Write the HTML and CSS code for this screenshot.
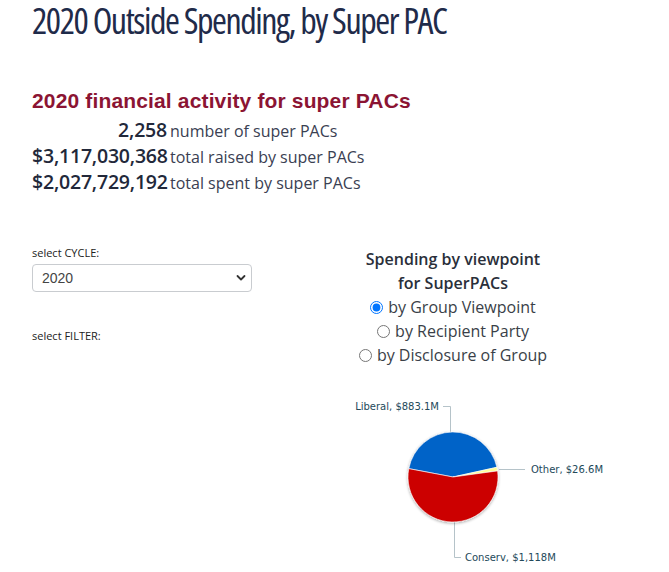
FILE: index.html
```html
<!DOCTYPE html>
<html>
<head>
<meta charset="utf-8">
<link rel="stylesheet" href="styles.css">
</head>
<body>
<div class="page">
  <h1 class="title">2020 Outside Spending, by Super PAC</h1>
  <h2 class="subhead">2020 financial activity for super PACs</h2>
  <div class="stats">
    <span class="num">2,258</span><span class="lbl">number of super PACs</span>
    <span class="num">$3,117,030,368</span><span class="lbl">total raised by super PACs</span>
    <span class="num">$2,027,729,192</span><span class="lbl">total spent by super PACs</span>
  </div>
  <div class="section">
    <div class="left">
      <div class="field-label">select CYCLE:</div>
      <div class="select-wrap">
        <select class="select"><option>2020</option></select>
        <svg class="chev" width="10" height="8" viewBox="0 0 10 8"><path d="M1.5 2 L5 5.5 L8.5 2" fill="none" stroke="#333" stroke-width="1.8" stroke-linecap="round" stroke-linejoin="round"/></svg>
      </div>
      <div class="field-label filter">select FILTER:</div>
    </div>
    <div class="right">
      <div class="chart-title">Spending by viewpoint<br>for SuperPACs</div>
      <label class="opt"><input type="radio" name="v" checked> by Group Viewpoint</label>
      <label class="opt"><input type="radio" name="v"> by Recipient Party</label>
      <label class="opt"><input type="radio" name="v"> by Disclosure of Group</label>
      <svg class="pie" width="300" height="177" viewBox="0 0 300 177">
        <defs>
          <filter id="sh" x="-20%" y="-20%" width="140%" height="140%">
            <feGaussianBlur in="SourceAlpha" stdDeviation="1.5"/>
            <feOffset dx="0" dy="1"/>
            <feComponentTransfer><feFuncA type="linear" slope="0.35"/></feComponentTransfer>
            <feMerge><feMergeNode/><feMergeNode in="SourceGraphic"/></feMerge>
          </filter>
        </defs>
        <g fill="none" stroke="#b5c3c9" stroke-width="1">
          <polyline points="140,10.5 147.5,10.5 147.5,37"/>
          <polyline points="196,73.5 222,73.5"/>
          <polyline points="151.5,125 151.5,161.5 158,161.5"/>
        </g>
        <g filter="url(#sh)" stroke="#ffffff" stroke-width="0.6">
          <path d="M150,81 L193.93,71.26 A45,45 0 0 0 105.78,72.64 Z" fill="#0563c8"/>
          <path d="M150,81 L194.58,74.89 A45,45 0 0 0 193.93,71.26 Z" fill="#ffff99"/>
          <path d="M150,81 L105.78,72.64 A45,45 0 1 0 194.58,74.89 Z" fill="#cc0000"/>
        </g>
        <g class="plabel">
          <text x="136" y="14" text-anchor="end">Liberal, $883.1M</text>
          <text x="228" y="77">Other, $26.6M</text>
          <text x="162" y="165">Conserv, $1,118M</text>
        </g>
      </svg>
    </div>
  </div>
</div>
</body>
</html>
```
FILE: styles.css
```css
html, body {
  margin: 0;
  padding: 0;
  background: #ffffff;
}
.page {
  padding: 0 32px;
  width: 669px;
  box-sizing: border-box;
}
.title {
  margin: 0;
  font-family: "Open Sans", sans-serif;
  font-stretch: 75%;
  font-weight: 400;
  font-size: 36px;
  line-height: 42px;
  color: #1f2b4a;
  letter-spacing: -1.45px;
  white-space: nowrap;
}
.subhead {
  margin: 47px 0 0;
  font-family: "Liberation Sans", Arial, sans-serif;
  font-weight: 700;
  font-size: 21px;
  line-height: 24px;
  letter-spacing: 0.15px;
  color: #8b1433;
}
.stats {
  display: grid;
  grid-template-columns: 135px auto;
  grid-auto-rows: 26px;
  column-gap: 3px;
  margin-top: 4px;
  align-items: baseline;
  font-family: "Open Sans", sans-serif;
}
.num {
  text-align: right;
  font-size: 19.5px;
  font-weight: 600;
  line-height: 26px;
  color: #22283a;
  letter-spacing: -0.2px;
  white-space: nowrap;
}
.lbl {
  font-size: 16px;
  line-height: 26px;
  color: #3a4052;
}
.section {
  display: flex;
  gap: 41px;
  margin-top: 50px;
}
.left {
  width: 230px;
  font-family: "Open Sans", sans-serif;
}
.field-label {
  font-size: 11px;
  line-height: 16px;
  color: #222;
}
.filter {
  margin-top: 36px;
}
.select-wrap {
  position: relative;
  width: 220px;
  margin-top: 3px;
}
.select {
  appearance: none;
  -webkit-appearance: none;
  display: block;
  width: 220px;
  height: 28px;
  box-sizing: border-box;
  border: 1px solid #c9ccd0;
  border-radius: 4px;
  background: #fff;
  padding: 0 0 0 9px;
  font-family: "Liberation Sans", Arial, sans-serif;
  font-size: 14px;
  color: #444;
}
.chev {
  position: absolute;
  right: 6px;
  top: 10px;
}
.right {
  width: 300px;
  margin-top: 2px;
  display: flex;
  flex-direction: column;
  align-items: center;
  font-family: "Open Sans", sans-serif;
}
.chart-title {
  text-align: center;
  font-size: 16px;
  font-weight: 600;
  line-height: 24px;
  color: #2a2f3a;
}
.opt {
  font-size: 16px;
  line-height: 24px;
  color: #3a3f48;
  display: flex;
  align-items: center;
  gap: 2px;
}
.opt input {
  margin: 0 3px 0 0;
  width: 13px;
  height: 13px;
}
.pie {
  display: block;
  margin-top: 29px;
}
.plabel text {
  font-family: "DejaVu Sans", Verdana, sans-serif;
  font-size: 10px;
  fill: #23495a;
}
```
